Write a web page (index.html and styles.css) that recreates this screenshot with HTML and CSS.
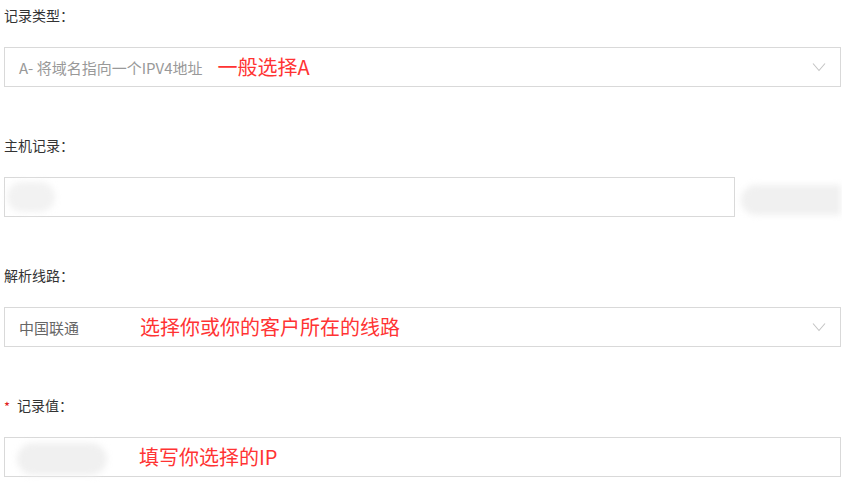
FILE: index.html
```html
<!DOCTYPE html>
<html lang="zh-CN">
<head>
<meta charset="utf-8">
<title>添加记录</title>
<link rel="stylesheet" href="styles.css">
</head>
<body>
<div class="form">
  <div class="item">
    <div class="label">记录类型：</div>
    <div class="box select">
      <span class="value">A- 将域名指向一个IPV4地址</span>
      <span class="note note-a">一般选择A</span>
      <svg class="chev" width="14" height="10" viewBox="0 0 14 10"><path d="M1 1.5 L7 8.5 L13 1.5" fill="none" stroke="#c4c4c4" stroke-width="1.1"/></svg>
    </div>
  </div>
  <div class="item">
    <div class="label">主机记录：</div>
    <div class="row">
      <div class="box input short">
        <span class="blur blur-host"></span>
      </div>
      <span class="blur blur-side"></span>
    </div>
  </div>
  <div class="item">
    <div class="label">解析线路：</div>
    <div class="box select">
      <span class="value dark">中国联通</span>
      <span class="note note-line">选择你或你的客户所在的线路</span>
      <svg class="chev" width="14" height="10" viewBox="0 0 14 10"><path d="M1 1.5 L7 8.5 L13 1.5" fill="none" stroke="#c4c4c4" stroke-width="1.1"/></svg>
    </div>
  </div>
  <div class="item">
    <div class="label"><span class="req">*</span>记录值：</div>
    <div class="box input">
      <span class="blur blur-val"></span>
      <span class="note note-ip">填写你选择的IP</span>
    </div>
  </div>
</div>
</body>
</html>
```
FILE: styles.css
```css
html, body {
  margin: 0;
  padding: 0;
  background: #fff;
}
body {
  font-family: "Noto Sans CJK SC", "Noto Sans", sans-serif;
  color: #333;
  width: 842px;
  height: 490px;
  overflow: hidden;
}
.form {
  padding: 5px 1px 0 4px;
}
.item {
  margin-bottom: 48px;
}
.item:last-child {
  margin-bottom: 0;
}
.label {
  font-size: 14px;
  line-height: 20px;
  height: 20px;
  margin-bottom: 22px;
  color: #333;
  display: flex;
  align-items: center;
}
.req {
  color: #e02020;
  font-size: 13px;
  width: 13px;
  line-height: 12px;
  margin-top: 3px;
}
.box {
  box-sizing: border-box;
  height: 40px;
  border: 1px solid #d9d9d9;
  display: flex;
  align-items: center;
  padding-left: 14px;
  position: relative;
}
.value {
  font-size: 15px;
  color: #999;
}
.value.dark {
  color: #666;
}
.note {
  color: #f33;
  font-size: 20px;
  line-height: 24px;
}
.note-a {
  margin-left: 15px;
}
.note-line {
  margin-left: 61px;
}
.note-ip {
  margin-left: 120px;
}
.chev {
  margin-left: auto;
  margin-right: 14px;
}
.row {
  display: flex;
  align-items: center;
}
.short {
  width: 731px;
  flex: none;
}
.blur {
  display: block;
  background: #efefef;
  filter: blur(3px);
}
.blur-host {
  position: absolute;
  left: 2px;
  top: 4px;
  width: 48px;
  height: 30px;
  border-radius: 15px;
  background: #f2f2f2;
}
.blur-val {
  position: absolute;
  left: 12px;
  top: 5px;
  width: 90px;
  height: 32px;
  border-radius: 16px;
  background: #f0f0f0;
}
.blur-side {
  width: 100px;
  height: 30px;
  border-radius: 15px 0 0 15px;
  margin-left: 6px;
  margin-top: 6px;
  background: #f0f0f0;
}
```
